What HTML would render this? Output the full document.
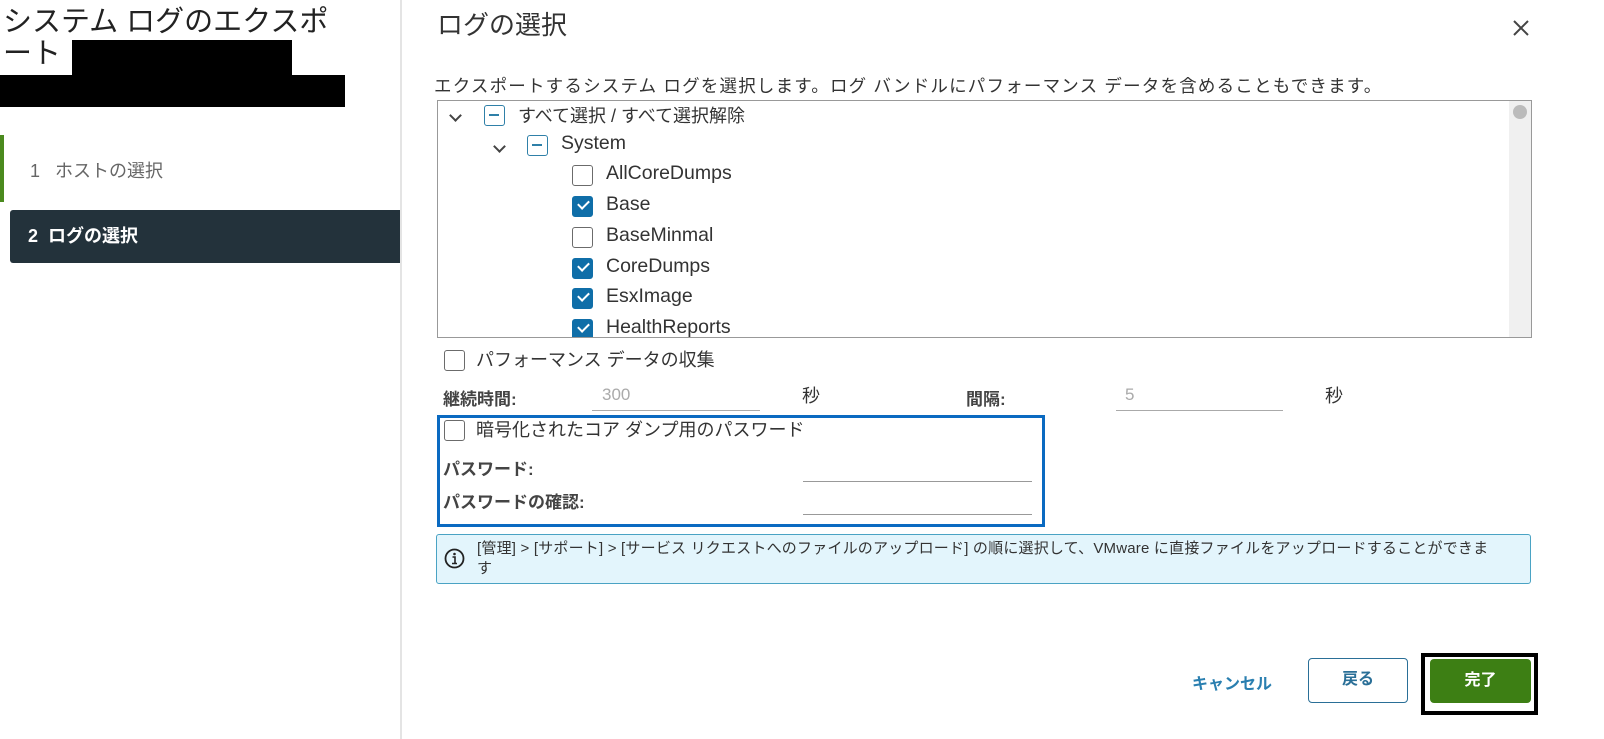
<!DOCTYPE html>
<html><head><meta charset="utf-8"><style>
*{box-sizing:border-box;margin:0;padding:0}
body{width:1604px;height:739px;background:#fff;font-family:"Liberation Sans","Noto Sans CJK JP",sans-serif;color:#333;position:relative;overflow:hidden}
.a{position:absolute;white-space:nowrap}
.cb{position:absolute;width:21px;height:21px;border:1.5px solid #6b6b6b;border-radius:3px;background:#fff}
.cb.on{background:#0f6ea8;border-color:#0f6ea8}
.cb.on::after{content:"";position:absolute;left:5px;top:3px;width:9px;height:5px;border-left:2px solid #fff;border-bottom:2px solid #fff;transform:rotate(-45deg)}
.cb.ind{border-color:#2f80a8}
.cb.ind::after{content:"";position:absolute;left:4px;top:8px;width:10px;height:2px;background:#2f80a8}
.chev{position:absolute;width:9px;height:9px;border-right:2px solid #444;border-bottom:2px solid #444;transform:rotate(45deg)}
.t{font-size:18px;color:#333}
.l{font-size:19.5px;color:#333}
.lbl{font-size:17px;font-weight:bold;color:#444}
.line{position:absolute;height:1px;background:#999}
</style></head><body>
<div class="a" style="left:3px;top:6px;font-size:29px;color:#222;line-height:32px">システム ログのエクスポ<br>ート</div>
<div class="a" style="left:72px;top:40px;width:220px;height:35px;background:#000"></div>
<div class="a" style="left:0;top:75px;width:345px;height:32px;background:#000"></div>
<div class="a" style="left:0;top:135px;width:4px;height:67px;background:#4b8a1e"></div>
<div class="a" style="left:30px;top:157px;font-size:18px;color:#666">1&nbsp;&nbsp;&nbsp;ホストの選択</div>
<div class="a" style="left:10px;top:210px;width:391px;height:53px;background:#23323b;border-radius:3px 0 0 3px"></div>
<div class="a" style="left:28px;top:222px;font-size:18px;font-weight:bold;color:#fff">2&nbsp;&nbsp;ログの選択</div>
<div class="a" style="left:400px;top:0;width:2px;height:739px;background:#e4e4e4"></div>

<div class="a" style="left:437px;top:5px;font-size:26px;color:#333">ログの選択</div>
<svg class="a" style="left:1512px;top:19px" width="18" height="18"><path d="M2 2L16 16M16 2L2 16" stroke="#444" stroke-width="2"/></svg>
<div class="a" style="left:434px;top:73px;font-size:17.5px;color:#333;letter-spacing:1.2px">エクスポートするシステム ログを選択します。ログ バンドルにパフォーマンス データを含めることもできます。</div>

<div class="a" style="left:437px;top:100px;width:1095px;height:238px;border:1px solid #999;overflow:hidden">
 <div class="a" style="right:0;top:0;width:22px;height:236px;background:#f0f0f0"></div>
 <div class="a" style="right:4px;top:4px;width:14px;height:14px;border-radius:7px;background:#bbb"></div>
 <div class="chev" style="left:13px;top:10px"></div>
 <div class="cb ind" style="left:46px;top:4px"></div>
 <div class="a t" style="left:80px;top:1px">すべて選択 / すべて選択解除</div>
 <div class="chev" style="left:57px;top:41px"></div>
 <div class="cb ind" style="left:89px;top:34px"></div>
 <div class="a l" style="left:123px;top:31px">System</div>
 <div class="cb" style="left:134px;top:64px"></div><div class="a l" style="left:168px;top:61px">AllCoreDumps</div>
 <div class="cb on" style="left:134px;top:95px"></div><div class="a l" style="left:168px;top:92px">Base</div>
 <div class="cb" style="left:134px;top:126px"></div><div class="a l" style="left:168px;top:123px">BaseMinmal</div>
 <div class="cb on" style="left:134px;top:157px"></div><div class="a l" style="left:168px;top:154px">CoreDumps</div>
 <div class="cb on" style="left:134px;top:187px"></div><div class="a l" style="left:168px;top:184px">EsxImage</div>
 <div class="cb on" style="left:134px;top:218px"></div><div class="a l" style="left:168px;top:215px">HealthReports</div>
</div>

<div class="cb" style="left:444px;top:350px"></div>
<div class="a t" style="left:476px;top:346px">パフォーマンス データの収集</div>
<div class="a lbl" style="left:443px;top:385px">継続時間:</div>
<div class="a" style="left:602px;top:385px;font-size:17px;color:#aaa">300</div>
<div class="line" style="left:592px;top:410px;width:168px;background:#aaa"></div>
<div class="a t" style="left:802px;top:382px">秒</div>
<div class="a lbl" style="left:966px;top:385px">間隔:</div>
<div class="a" style="left:1125px;top:385px;font-size:17px;color:#aaa">5</div>
<div class="line" style="left:1116px;top:410px;width:167px;background:#aaa"></div>
<div class="a t" style="left:1325px;top:382px">秒</div>

<div class="a" style="left:437px;top:415px;width:608px;height:112px;border:3px solid #0a6ac1"></div>
<div class="cb" style="left:444px;top:420px"></div>
<div class="a t" style="left:476px;top:416px">暗号化されたコア ダンプ用のパスワード</div>
<div class="a lbl" style="left:443px;top:455px">パスワード:</div>
<div class="line" style="left:803px;top:481px;width:229px"></div>
<div class="a lbl" style="left:443px;top:488px">パスワードの確認:</div>
<div class="line" style="left:803px;top:514px;width:229px"></div>

<div class="a" style="left:436px;top:534px;width:1095px;height:50px;background:#e3f5fc;border:1.5px solid #4aa3c4;border-radius:3px"></div>
<svg class="a" style="left:444px;top:548px" width="21" height="21"><circle cx="10.5" cy="10.5" r="9" fill="none" stroke="#222" stroke-width="1.8"/><circle cx="10.5" cy="6" r="1.3" fill="#222"/><path d="M8.5 9h2.5v6M8 15.5h5" stroke="#222" stroke-width="1.6" fill="none"/></svg>
<div class="a" style="left:477px;top:539px;font-size:15px;color:#333;line-height:20px;letter-spacing:0.2px">[管理] &gt; [サポート] &gt; [サービス リクエストへのファイルのアップロード] の順に選択して、VMware に直接ファイルをアップロードすることができま<br>す</div>

<div class="a" style="left:1192px;top:670px;font-size:16px;font-weight:bold;color:#2a7fb0">キャンセル</div>
<div class="a" style="left:1308px;top:658px;width:100px;height:45px;border:1.5px solid #2a6f97;border-radius:4px;font-size:16px;font-weight:bold;color:#2a6f97;text-align:center;line-height:42px">戻る</div>
<div class="a" style="left:1421px;top:653px;width:117px;height:62px;border:4px solid #000"></div>
<div class="a" style="left:1430px;top:659px;width:101px;height:44px;background:#3d7f14;border-radius:4px;font-size:16px;font-weight:bold;color:#fff;text-align:center;line-height:44px">完了</div>
</body></html>
